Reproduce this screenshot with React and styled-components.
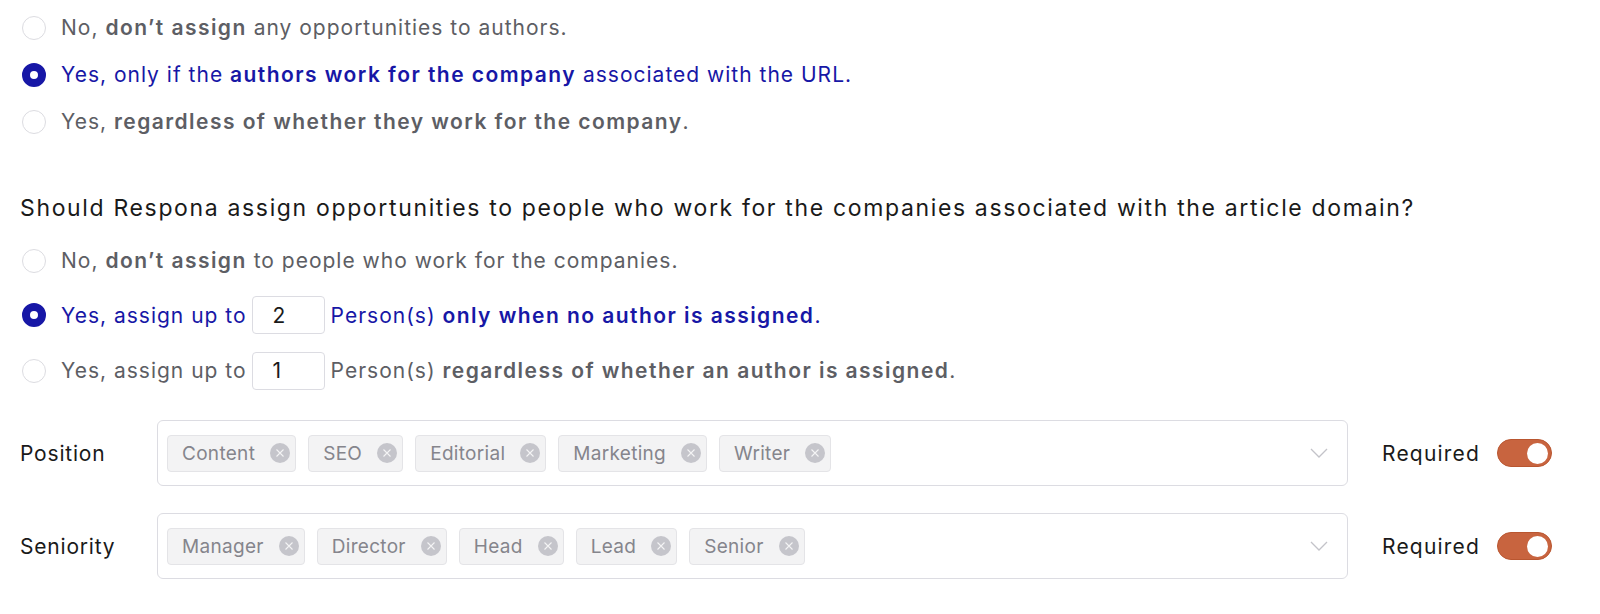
import styled, { createGlobalStyle } from 'styled-components';

const BLUE = '#1717a6';
const GRAY = '#5d5e64';

const GlobalStyle = createGlobalStyle`
  body {
    margin: 0;
    background: #fff;
    font-family: Inter, "Noto Sans", sans-serif;
  }
`;

const Page = styled.div`
  padding: 4px 20px 0 20px;
  width: 1600px;
  box-sizing: border-box;
`;

const Group = styled.div`
  display: flex;
  flex-direction: column;
`;

const Option = styled.label`
  display: flex;
  align-items: center;
  height: ${p => p.$h}px;
  font-size: 21px;
  color: ${p => (p.$checked ? BLUE : GRAY)};
  letter-spacing: 1px;
  b {
    font-weight: 600;
    letter-spacing: 1.45px;
  }
`;

const Radio = styled.span`
  width: 24px;
  height: 24px;
  margin-left: 2px;
  margin-right: 15px;
  box-sizing: border-box;
  border-radius: 50%;
  flex-shrink: 0;
  border: ${p => (p.$checked ? `8px solid ${BLUE}` : '1.5px solid #dcdce1')};
  background: #fff;
`;

const CountInput = styled.span`
  display: inline-flex;
  align-items: center;
  width: 73px;
  height: 38px;
  box-sizing: border-box;
  margin: 0 6px 0 5px;
  padding-left: 20px;
  border: 1px solid #dcdce2;
  border-radius: 4px;
  color: #1a1a1a;
`;

const Question = styled.div`
  margin-top: 48px;
  margin-bottom: 11px;
  line-height: 30px;
  font-size: 23px;
  color: #1a1a1a;
  letter-spacing: 1.65px;
`;

const Fields = styled.div`
  margin-top: 22px;
  display: flex;
  flex-direction: column;
  gap: 27px;
`;

const FieldRow = styled.div`
  display: flex;
  align-items: center;
`;

const FieldLabel = styled.div`
  width: 137px;
  font-size: 21px;
  letter-spacing: 0.8px;
  color: #1a1a1a;
`;

const Select = styled.div`
  width: 1191px;
  height: 66px;
  box-sizing: border-box;
  border: 1px solid #dcdce2;
  border-radius: 6px;
  display: flex;
  align-items: center;
  padding: 0 19px 0 9px;
`;

const Chips = styled.div`
  flex: 1;
  display: flex;
  gap: 12px;
`;

const Chip = styled.div`
  height: 37px;
  box-sizing: border-box;
  display: flex;
  align-items: center;
  gap: 15px;
  padding: 0 5px 0 14px;
  background: #f3f3f4;
  border: 1px solid #e4e4e7;
  border-radius: 4px;
  font-size: 19px;
  letter-spacing: 0.3px;
  color: #85858c;
`;

const ChipClose = styled.span`
  width: 20px;
  height: 20px;
  border-radius: 50%;
  background: #c5c5cb;
  display: flex;
  align-items: center;
  justify-content: center;
`;

const RequiredLabel = styled.div`
  margin-left: 34px;
  font-size: 21px;
  letter-spacing: 1.2px;
  color: #1a1a1a;
`;

const Toggle = styled.span`
  margin-left: 17px;
  width: 55px;
  height: 28px;
  box-sizing: border-box;
  border-radius: 14px;
  background: #c8643f;
  border: 1px solid #b95630;
  display: flex;
  align-items: center;
  justify-content: flex-end;
  padding-right: 3px;
  &::after {
    content: '';
    width: 21px;
    height: 21px;
    border-radius: 50%;
    background: #fff;
  }
`;

function CloseIcon() {
  return (
    <svg width="10" height="10" viewBox="0 0 10 10">
      <path d="M1.5 1.5 L8.5 8.5 M8.5 1.5 L1.5 8.5" stroke="#f4f4f5" strokeWidth="1.1" />
    </svg>
  );
}

function Chevron() {
  return (
    <svg width="18" height="10" viewBox="0 0 18 10">
      <path d="M1 1 L9 9 L17 1" fill="none" stroke="#c3c3c9" strokeWidth="1.3" />
    </svg>
  );
}

const fields = [
  { label: 'Position', tags: ['Content', 'SEO', 'Editorial', 'Marketing', 'Writer'] },
  { label: 'Seniority', tags: ['Manager', 'Director', 'Head', 'Lead', 'Senior'] },
];

export default function App() {
  return (
    <Page>
      <GlobalStyle />
      <Group>
        <Option $h={47}>
          <Radio />
          <span>No, <b>don’t assign</b> any opportunities to authors.</span>
        </Option>
        <Option $h={47} $checked>
          <Radio $checked />
          <span>Yes, only if the <b>authors work for the company</b> associated with the URL.</span>
        </Option>
        <Option $h={47}>
          <Radio />
          <span>Yes, <b>regardless of whether they work for the company</b>.</span>
        </Option>
      </Group>

      <Question>
        Should Respona assign opportunities to people who work for the companies associated with the article domain?
      </Question>

      <Group>
        <Option $h={53}>
          <Radio />
          <span>No, <b>don’t assign</b> to people who work for the companies.</span>
        </Option>
        <Option $h={56} $checked>
          <Radio $checked />
          <span>Yes, assign up to</span>
          <CountInput>2</CountInput>
          <span>Person(s) <b>only when no author is assigned</b>.</span>
        </Option>
        <Option $h={55}>
          <Radio />
          <span>Yes, assign up to</span>
          <CountInput>1</CountInput>
          <span>Person(s) <b>regardless of whether an author is assigned</b>.</span>
        </Option>
      </Group>

      <Fields>
        {fields.map(field => (
          <FieldRow key={field.label}>
            <FieldLabel>{field.label}</FieldLabel>
            <Select>
              <Chips>
                {field.tags.map(tag => (
                  <Chip key={tag}>
                    {tag}
                    <ChipClose>
                      <CloseIcon />
                    </ChipClose>
                  </Chip>
                ))}
              </Chips>
              <Chevron />
            </Select>
            <RequiredLabel>Required</RequiredLabel>
            <Toggle />
          </FieldRow>
        ))}
      </Fields>
    </Page>
  );
}
